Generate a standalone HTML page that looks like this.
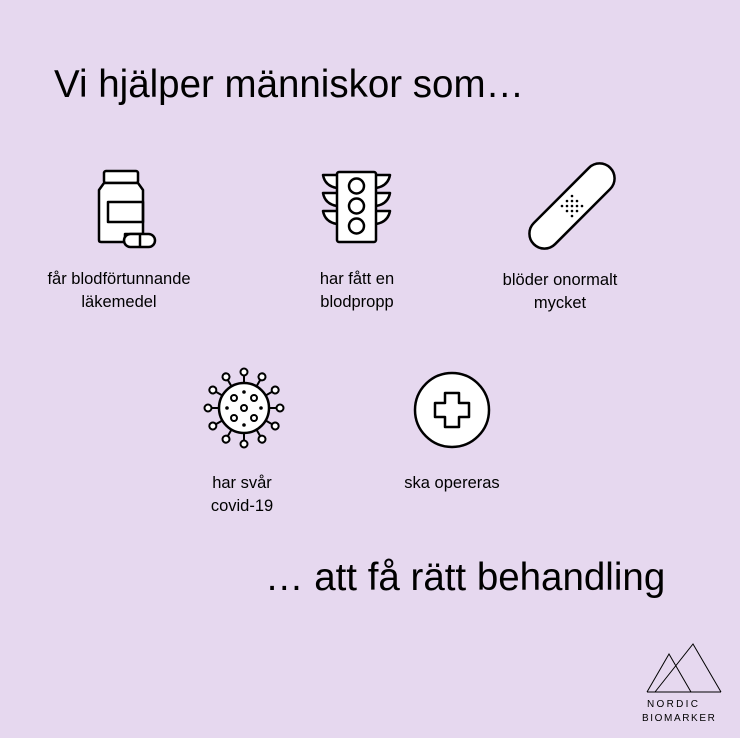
<!DOCTYPE html>
<html><head><meta charset="utf-8"><style>
body{margin:0;width:740px;height:738px;background:#e6d8ef;position:relative;overflow:hidden;font-family:"Liberation Sans",sans-serif;color:#000}
.t{position:absolute;white-space:nowrap}
.h{font-size:38.5px;letter-spacing:0}
.l{font-size:16.5px;text-align:center;line-height:23px;width:220px}
svg{position:absolute;left:0;top:0}
</style></head><body>
<div class="t h" style="left:54px;top:63px">Vi hjälper människor som…</div>
<div class="t h" style="left:265px;top:556px">… att få rätt behandling</div>
<div class="t l" style="left:9px;top:268px">får blodförtunnande<br>läkemedel</div>
<div class="t l" style="left:247px;top:268px">har fått en<br>blodpropp</div>
<div class="t l" style="left:450px;top:269px">blöder onormalt<br>mycket</div>
<div class="t l" style="left:132px;top:472px">har svår<br>covid-19</div>
<div class="t l" style="left:342px;top:472px">ska opereras</div>
<div class="t" style="left:647px;top:699px;font-size:10px;letter-spacing:2.3px">NORDIC</div>
<div class="t" style="left:642px;top:713px;font-size:10px;letter-spacing:1.6px">BIOMARKER</div>
<svg width="740" height="738" fill="none" stroke="#000" stroke-width="2.5" stroke-linejoin="round">
<rect x="104" y="171" width="34" height="12" rx="2" fill="#fff"/>
<path d="M104 183 L99 190 V240 Q99 242 101 242 H125 V234 H143 V190 L138 183 Z" fill="#fff"/>
<rect x="108" y="202" width="35" height="20" fill="none"/>
<rect x="124" y="234" width="31" height="13" rx="6.5" fill="#fff"/>
<line x1="140" y1="234" x2="140" y2="247"/>
<path d="M337 175 H323 Q325 186 337 188 M337 193 H323 Q325 204 337 206 M337 211 H323 Q325 222 337 224 M376 175 H390 Q388 186 376 188 M376 193 H390 Q388 204 376 206 M376 211 H390 Q388 222 376 224" fill="#fff"/>
<rect x="337" y="172" width="39" height="70" rx="2" fill="#fff"/>
<circle cx="356.5" cy="186" r="7.5"/><circle cx="356.5" cy="206" r="7.5"/><circle cx="356.5" cy="226" r="7.5"/>
<rect x="518" y="191" width="108" height="30" rx="15" fill="#fff" transform="rotate(-45 572 206)"/>
<g fill="#000" stroke="none">
<circle cx="572" cy="196" r="1.3"/><circle cx="567" cy="201" r="1.3"/><circle cx="577" cy="201" r="1.3"/><circle cx="562" cy="206" r="1.3"/><circle cx="572" cy="206" r="1.3"/><circle cx="582" cy="206" r="1.3"/><circle cx="567" cy="211" r="1.3"/><circle cx="577" cy="211" r="1.3"/><circle cx="572" cy="216" r="1.3"/><circle cx="572" cy="201" r="1.3"/><circle cx="567" cy="206" r="1.3"/><circle cx="577" cy="206" r="1.3"/><circle cx="572" cy="211" r="1.3"/>
</g>
<g transform="translate(244 408)">
<g stroke-width="2">
<g id="sp"><line x1="0" y1="-25" x2="0" y2="-33"/><circle cx="0" cy="-36" r="3.5" fill="#fff"/></g>
<use href="#sp" transform="rotate(30)"/><use href="#sp" transform="rotate(60)"/><use href="#sp" transform="rotate(90)"/><use href="#sp" transform="rotate(120)"/><use href="#sp" transform="rotate(150)"/><use href="#sp" transform="rotate(180)"/><use href="#sp" transform="rotate(210)"/><use href="#sp" transform="rotate(240)"/><use href="#sp" transform="rotate(270)"/><use href="#sp" transform="rotate(300)"/><use href="#sp" transform="rotate(330)"/>
</g>
<circle r="25" fill="#fff"/>
<g stroke-width="2"><circle cx="-10" cy="-10" r="3"/><circle cx="10" cy="-10" r="3"/><circle cx="0" cy="0" r="3"/><circle cx="-10" cy="10" r="3"/><circle cx="10" cy="10" r="3"/></g>
<g fill="#000" stroke="none"><circle cx="0" cy="-16" r="1.8"/><circle cx="-17" cy="0" r="1.8"/><circle cx="17" cy="0" r="1.8"/><circle cx="0" cy="17" r="1.8"/></g>
</g>
<circle cx="452" cy="410" r="37" fill="#fff"/>
<path d="M445 393 H459 V403 H469 V417 H459 V427 H445 V417 H435 V403 H445 Z"/>
<g stroke-width="1" stroke-linejoin="miter">
<path d="M647 692 L669 654 L691 692 M655 692 L693 644 L721 692 M647 692 H721"/>
</g>
</svg>
</body></html>
